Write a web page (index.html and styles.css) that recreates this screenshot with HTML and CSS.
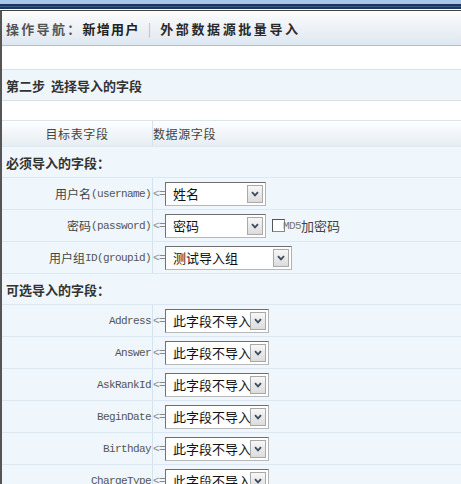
FILE: index.html
```html
<!DOCTYPE html>
<html lang="zh-CN">
<head>
<meta charset="utf-8">
<title>外部数据源批量导入</title>
<link rel="stylesheet" href="styles.css">
</head>
<body>
<div class="topband"></div>
<div class="navband"><div class="stripe"></div></div>
<div class="frame">
  <div class="crumb"><span class="c1">操作导航：</span><span class="c2">新增用户</span><span class="pipe">|</span><span class="c3">外部数据源批量导入</span></div>
  <div class="blank b1"></div>
  <div class="step">第二步&nbsp;&nbsp;选择导入的字段</div>
  <div class="blank b2"></div>
  <div class="grid">
    <div class="hrow"><div class="hc1">目标表字段</div><div class="hc2">数据源字段</div></div>
    <div class="sec">必须导入的字段：</div>
    <div class="row"><div class="lab">用户名<span class="en">(username)</span></div><div class="val"><span class="arrow">&lt;=</span><div class="sel w101"><span class="txt">姓名</span><span class="btn"><svg width="8" height="6" viewBox="0 0 8 6"><path d="M1 1.2 L4 4.4 L7 1.2" fill="none" stroke="#3e4c5e" stroke-width="1.8"/></svg></span></div></div></div>
    <div class="row"><div class="lab">密码<span class="en">(password)</span></div><div class="val"><span class="arrow">&lt;=</span><div class="sel w101"><span class="txt">密码</span><span class="btn"><svg width="8" height="6" viewBox="0 0 8 6"><path d="M1 1.2 L4 4.4 L7 1.2" fill="none" stroke="#3e4c5e" stroke-width="1.8"/></svg></span></div><span class="chk"></span><span class="md5">MD5</span><span class="md5t">加密码</span></div></div>
    <div class="row"><div class="lab">用户组<span class="en">ID(groupid)</span></div><div class="val"><span class="arrow">&lt;=</span><div class="sel w127"><span class="txt">测试导入组</span><span class="btn"><svg width="8" height="6" viewBox="0 0 8 6"><path d="M1 1.2 L4 4.4 L7 1.2" fill="none" stroke="#3e4c5e" stroke-width="1.8"/></svg></span></div></div></div>
    <div class="sec">可选导入的字段：</div>
    <div class="row"><div class="lab"><span class="en">Address</span></div><div class="val"><span class="arrow">&lt;=</span><div class="sel w104"><span class="txt">此字段不导入</span><span class="btn"><svg width="8" height="6" viewBox="0 0 8 6"><path d="M1 1.2 L4 4.4 L7 1.2" fill="none" stroke="#3e4c5e" stroke-width="1.8"/></svg></span></div></div></div>
    <div class="row"><div class="lab"><span class="en">Answer</span></div><div class="val"><span class="arrow">&lt;=</span><div class="sel w104"><span class="txt">此字段不导入</span><span class="btn"><svg width="8" height="6" viewBox="0 0 8 6"><path d="M1 1.2 L4 4.4 L7 1.2" fill="none" stroke="#3e4c5e" stroke-width="1.8"/></svg></span></div></div></div>
    <div class="row"><div class="lab"><span class="en">AskRankId</span></div><div class="val"><span class="arrow">&lt;=</span><div class="sel w104"><span class="txt">此字段不导入</span><span class="btn"><svg width="8" height="6" viewBox="0 0 8 6"><path d="M1 1.2 L4 4.4 L7 1.2" fill="none" stroke="#3e4c5e" stroke-width="1.8"/></svg></span></div></div></div>
    <div class="row"><div class="lab"><span class="en">BeginDate</span></div><div class="val"><span class="arrow">&lt;=</span><div class="sel w104"><span class="txt">此字段不导入</span><span class="btn"><svg width="8" height="6" viewBox="0 0 8 6"><path d="M1 1.2 L4 4.4 L7 1.2" fill="none" stroke="#3e4c5e" stroke-width="1.8"/></svg></span></div></div></div>
    <div class="row"><div class="lab"><span class="en">Birthday</span></div><div class="val"><span class="arrow">&lt;=</span><div class="sel w104"><span class="txt">此字段不导入</span><span class="btn"><svg width="8" height="6" viewBox="0 0 8 6"><path d="M1 1.2 L4 4.4 L7 1.2" fill="none" stroke="#3e4c5e" stroke-width="1.8"/></svg></span></div></div></div>
    <div class="row"><div class="lab"><span class="en">ChargeType</span></div><div class="val"><span class="arrow">&lt;=</span><div class="sel w104"><span class="txt">此字段不导入</span><span class="btn"><svg width="8" height="6" viewBox="0 0 8 6"><path d="M1 1.2 L4 4.4 L7 1.2" fill="none" stroke="#3e4c5e" stroke-width="1.8"/></svg></span></div></div></div>
  </div>
</div>
</body>
</html>
```
FILE: styles.css
```css
html, body {
  margin: 0;
  padding: 0;
  background: #fff;
}
body {
  font-family: "Noto Sans CJK SC", "Liberation Sans", sans-serif;
  font-size: 12px;
  color: #333;
  overflow: hidden;
}
.topband {
  height: 4px;
  background: #a9c7e9;
}
.navband {
  height: 5px;
  background: #1d3860;
  display: flex;
  flex-direction: column;
  justify-content: center;
  border-bottom: 1px solid #fff;
}
.stripe {
  height: 1px;
  background: #3a5c88;
}
.frame {
  border-top: 1px solid #404040;
  border-left: 2px solid #555;
}
.crumb {
  height: 34px;
  border-bottom: 1px solid #9cc5e3;
  background: linear-gradient(#fbfcfd, #dfe7ef);
  display: flex;
  align-items: center;
  padding-left: 4px;
  font-size: 13px;
  font-weight: bold;
  line-height: 1;
}
.c1 { color: #555; letter-spacing: 2.3px; }
.c2 { color: #222; letter-spacing: 1.3px; }
.pipe { color: #c4b9a6; margin: 0 9px 0 8px; font-weight: normal; }
.c3 { color: #2a2a2a; letter-spacing: 2.6px; }
.blank { background: #fff; }
.b1 { height: 23px; }
.b2 { height: 19px; }
.step {
  height: 30px;
  border-top: 1px solid #d8e2ea;
  border-bottom: 1px solid #d8e2ea;
  background: #eef6fc;
  display: flex;
  align-items: center;
  padding-left: 4px;
  font-size: 13px;
  font-weight: bold;
  color: #333;
}
.grid {
  border-top: 1px solid #dbe5ec;
}
.hrow {
  display: flex;
  height: 25px;
  border-bottom: 1px solid #e2eaf0;
  background: linear-gradient(#fdfefe, #e6edf2);
  color: #444;
  letter-spacing: 0.6px;
}
.hc1 {
  width: 151px;
  box-sizing: border-box;
  border-right: 1px solid #d3e3f0;
  display: flex;
  align-items: center;
  justify-content: center;
}
.hc2 {
  display: flex;
  align-items: center;
}
.sec {
  height: 30px;
  border-bottom: 1px solid #dbe8f3;
  background: #eff6fc;
  display: flex;
  align-items: center;
  padding-left: 4px;
  font-size: 13px;
  font-weight: bold;
  color: #333;
}
.row {
  display: flex;
  height: 31px;
  border-bottom: 1px solid #dbe8f3;
  background: #eff6fc;
}
.lab {
  width: 151px;
  box-sizing: border-box;
  border-right: 1px solid #d3e3f0;
  display: flex;
  align-items: center;
  justify-content: flex-end;
  padding-right: 1px;
  color: #444;
}
.en {
  font-family: "Liberation Mono", "DejaVu Sans Mono", monospace;
  font-size: 11px;
  letter-spacing: -0.6px;
  color: #555;
}
.val {
  flex: 1;
  display: flex;
  align-items: center;
}
.arrow {
  font-family: "Liberation Mono", "DejaVu Sans Mono", monospace;
  font-size: 11px;
  letter-spacing: -0.6px;
  color: #888;
  width: 12px;
}
.sel {
  height: 24px;
  box-sizing: border-box;
  border: 1px solid;
  border-color: #6f6f6f #b3b3b3 #b8b8b8 #727272;
  background: #fff;
  display: flex;
  align-items: center;
}
.w101 { width: 101px; }
.w104 { width: 104px; }
.w127 { width: 127px; }
.txt {
  flex: 1;
  min-width: 0;
  white-space: nowrap;
  padding-left: 7px;
  font-size: 13px;
  color: #111;
  line-height: 22px;
}
.btn {
  flex: none;
  width: 16px;
  height: 18px;
  box-sizing: border-box;
  margin-right: 2px;
  border: 1px solid #a9a9a9;
  background: linear-gradient(#f7f7f7, #dcdcdc);
  display: flex;
  align-items: center;
  justify-content: center;
}
.chk {
  width: 13px;
  height: 13px;
  box-sizing: border-box;
  border: 1px solid;
  border-color: #555 #888 #888 #555;
  background: #fff;
  margin-left: 6px;
}
.md5 {
  font-family: "Liberation Mono", "DejaVu Sans Mono", monospace;
  font-size: 11px;
  letter-spacing: -0.6px;
  color: #777;
  margin-left: -2px;
}
.md5t {
  font-size: 13px;
  color: #444;
}
```
